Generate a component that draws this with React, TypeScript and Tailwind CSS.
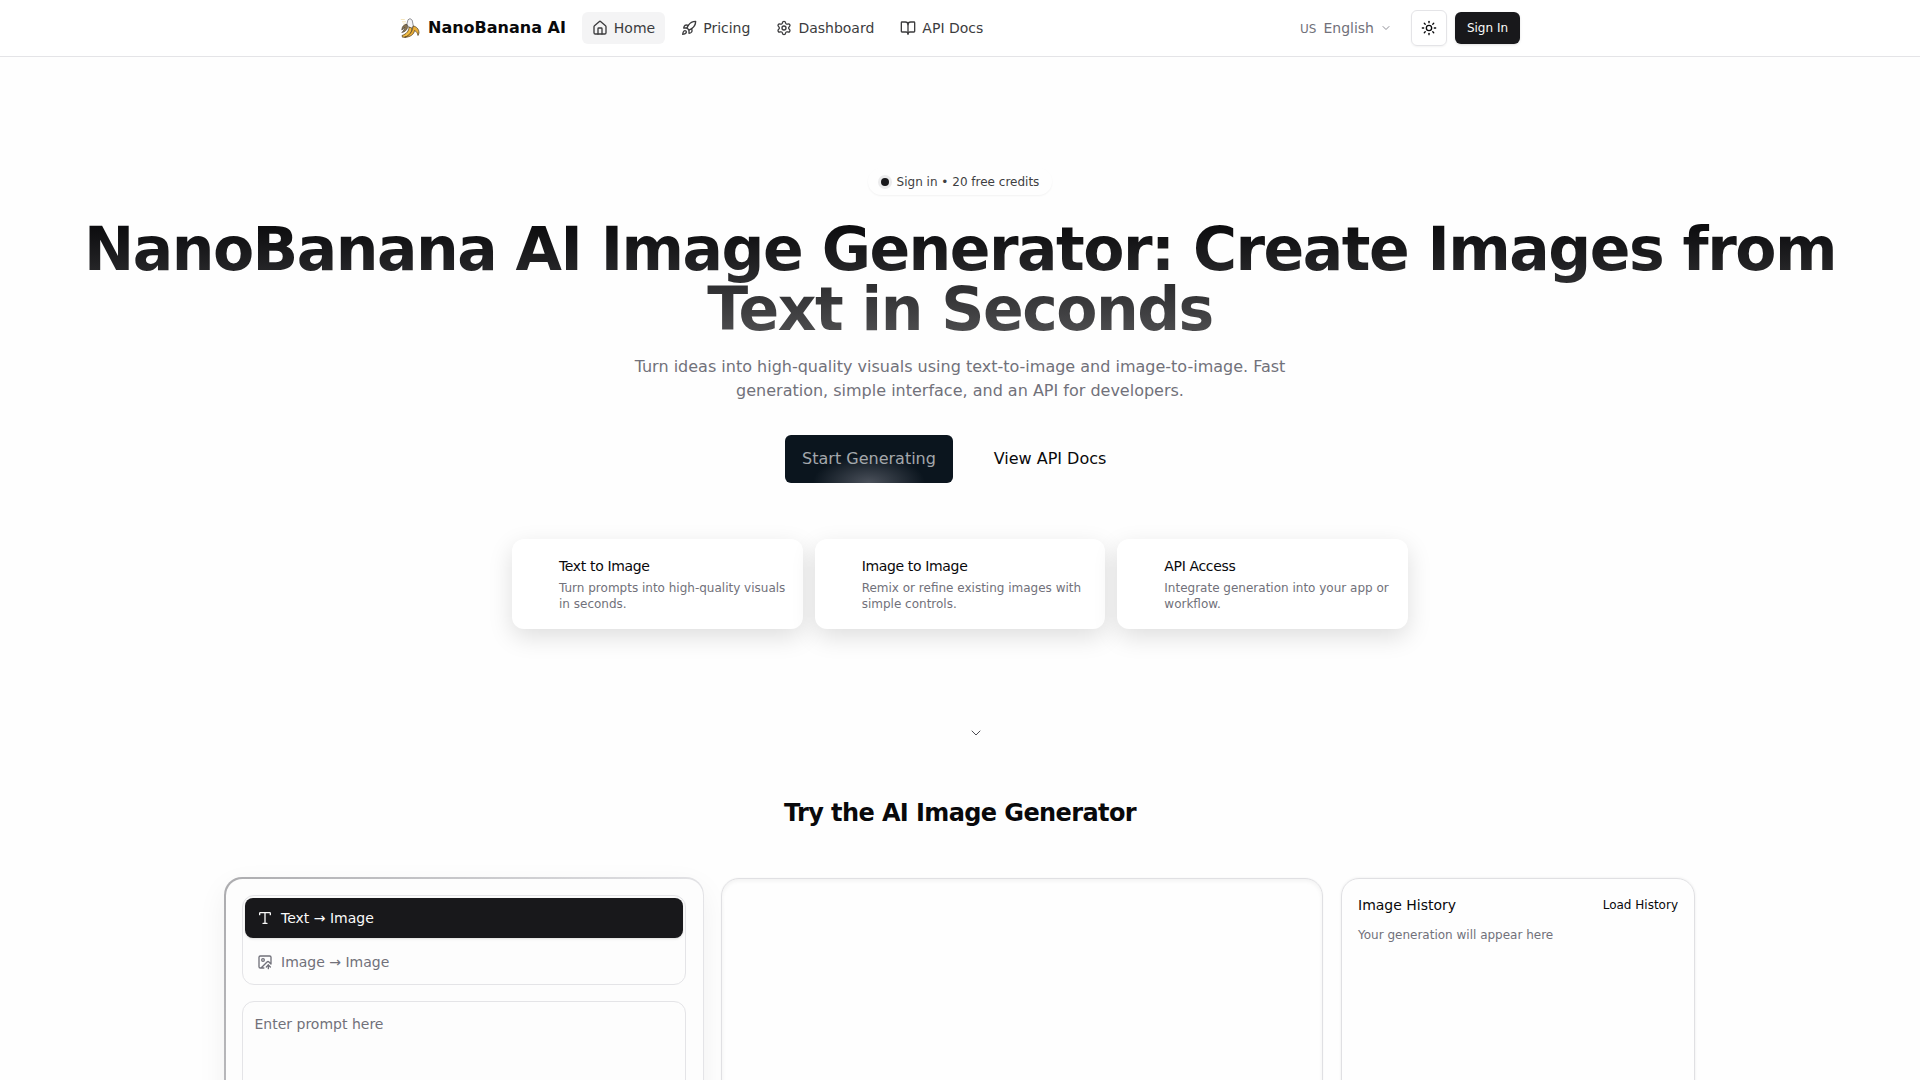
import React from "react";
import { House, Rocket, Settings, BookOpen, ChevronDown, Sun, Type, ImageUp } from "lucide-react";

const navItems = [
  { label: "Home", Icon: House, active: true },
  { label: "Pricing", Icon: Rocket, active: false },
  { label: "Dashboard", Icon: Settings, active: false },
  { label: "API Docs", Icon: BookOpen, active: false },
];

const features = [
  { title: "Text to Image", text: "Turn prompts into high-quality visuals in seconds." },
  { title: "Image to Image", text: "Remix or refine existing images with simple controls." },
  { title: "API Access", text: "Integrate generation into your app or workflow." },
];

function BananaLogo() {
  return (
    <svg viewBox="0 0 20 20" className="h-5 w-5">
      <path d="M.8 1.500h4M2 3.800h4M3 6h3" stroke="#f3dfae" strokeWidth=".8" />
      <path d="M6.800 6.500 8 1.800 10 .6l2.200 1.600L13.500 9l-3 2z" fill="#f4f4f6" stroke="#77777c" strokeWidth=".8" />
      <path d="M7 6.300C4 6.300 2 8.500 1.800 12l3-2.800c-.3 2-1.500 4-3 5.300 3.200-.5 5-2.500 5.800-5z" fill="#8a7350" stroke="#4b4436" strokeWidth=".7" />
      <path d="M9 9c0 4-2.500 7-7 8.500l.5 1.700c5.500.3 9-3 9.500-9z" fill="#f2bd45" stroke="#46351c" strokeWidth=".7" />
      <path d="M13 8c3.500.5 6 3 6 7l-1 2.500c-.5-2.500-1.500-4-3.500-5-.5 4-4 6.500-10 6.900 5-2 8-5.400 8.500-11.400z" fill="#eaae38" stroke="#46351c" strokeWidth=".7" />
    </svg>
  );
}

function Header() {
  return (
    <header className="h-[57px] border-b border-[#e4e4e7] bg-white">
      <div className="mx-auto flex h-14 w-[1120px] items-center">
        <BananaLogo />
        <span className="ml-2 text-base font-bold">NanoBanana AI</span>
        <nav className="ml-4 flex gap-1.5">
          {navItems.map(({ label, Icon, active }) => (
            <a key={label} className={`flex h-8 items-center gap-1.5 rounded-md px-2.5 text-sm text-[#3c3c3e] ${active ? "bg-[#f4f4f5]" : ""}`}>
              <Icon size={16} strokeWidth={2} />
              {label}
            </a>
          ))}
        </nav>
        <div className="ml-auto flex items-center text-sm text-[#71717a]">
          <span className="pt-px text-xs">US</span>
          <span className="ml-[7px]">English</span>
          <ChevronDown size={12} className="ml-1.5 text-[#8e8e96]" />
          <button className="ml-[19px] flex size-9 items-center justify-center rounded-md border border-[#e4e4e7] text-[#09090b] shadow-xs">
            <Sun size={16} />
          </button>
          <button className="ml-2 h-8 w-[65px] rounded-md bg-[#18181b] text-xs text-[#fafafa] shadow-sm">Sign In</button>
        </div>
      </div>
    </header>
  );
}

function Hero() {
  return (
    <section className="flex flex-col items-center">
      <div className="mt-[111px] flex h-[27px] w-[184px] items-center justify-center gap-2 rounded-full text-xs text-[#3f3f42] shadow-[0_1px_2px_rgba(0,0,0,0.05)]">
        <span className="size-2 rounded-full bg-[#18181b] shadow-[0_0_0_3px_#ebebec]" />
        Sign in • 20 free credits
      </div>
      <h1 className="mt-6 w-[1800px] bg-gradient-to-b from-[#09090b] to-[#515153] bg-clip-text text-center text-6xl leading-none font-bold tracking-tight text-transparent">
        NanoBanana AI Image Generator: Create Images from Text in Seconds
      </h1>
      <p className="mt-4 w-[672px] text-center text-base text-[#71717a]">
        Turn ideas into high-quality visuals using text-to-image and image-to-image. Fast generation, simple interface, and an API for developers.
      </p>
      <div className="mt-8 flex gap-3">
        <button className="h-12 w-[168px] rounded-md bg-[#0b151e] bg-[radial-gradient(ellipse_56px_28px_at_50%_100%,#4b515b,transparent)] text-base text-[#a3a7ab]">Start Generating</button>
        <button className="h-12 w-[170px] text-base">View API Docs</button>
      </div>
      <div className="mt-14 grid w-4xl grid-cols-3 gap-3">
        {features.map((f) => (
          <article key={f.title} className="h-[90px] rounded-xl bg-white pt-[17px] pr-3 pl-[47px] shadow-[0_8px_24px_rgba(0,0,0,0.13)]">
            <h3 className="text-sm tracking-tight">{f.title}</h3>
            <p className="mt-1 text-xs text-[#71717a]">{f.text}</p>
          </article>
        ))}
      </div>
      <ChevronDown size={16} strokeWidth={1.4} className="mt-[96px] ml-8 text-[#3f3f46]" />
    </section>
  );
}

function Generator() {
  return (
    <section className="mx-auto w-[1472px]">
      <h2 className="mt-14 text-center text-2xl font-bold tracking-tight">Try the AI Image Generator</h2>
      <div className="mt-12 flex items-start">
        <div className="h-[600px] w-[480px] shrink-0 rounded-[18px] bg-[linear-gradient(115deg,#acacaf_0%,#e4e4e7_65%)] p-[1.5px] shadow-[0_10px_30px_rgba(0,0,0,0.06)]">
          <div className="h-full rounded-[16.5px] bg-[#fdfdfd] pt-4 pr-[17px] pl-4">
            <div className="h-[90px] rounded-xl border border-[#e4e4e7] p-0.5">
              <div className="flex h-10 items-center gap-[8.5px] rounded-lg bg-[#18181b] px-3 text-sm text-[#fafafa] shadow-sm"><Type size={16} />Text → Image</div>
              <div className="mt-1 flex h-10 items-center gap-[8.5px] px-3 text-sm text-[#71717a]"><ImageUp size={16} />Image → Image</div>
            </div>
            <div className="mt-4 h-60 rounded-xl border border-[#e4e4e7] px-3 py-3 text-sm text-[#71717a]">Enter prompt here</div>
          </div>
        </div>
        <div className="mt-px ml-[17px] h-[600px] w-[602px] rounded-[18px] border border-[#e0e0e3] shadow-[inset_0_2px_4px_rgba(0,0,0,0.05),0_0_2px_rgba(0,0,0,0.06)]" />
        <div className="mt-px ml-[18px] h-[600px] w-[354px] rounded-[18px] border border-[#e0e0e3] px-4 pt-4 shadow-[0_0_3px_rgba(0,0,0,0.08)]">
          <div className="flex items-center justify-between">
            <h3 className="text-sm">Image History</h3>
            <span className="text-xs">Load History</span>
          </div>
          <p className="mt-3 text-xs text-[#71717a]">Your generation will appear here</p>
        </div>
      </div>
    </section>
  );
}

export default function App() {
  return (
    <div className="h-[1080px] overflow-hidden bg-[#fefefe] font-['DejaVu_Sans',sans-serif] text-[#09090b]">
      <Header />
      <Hero />
      <Generator />
    </div>
  );
}
